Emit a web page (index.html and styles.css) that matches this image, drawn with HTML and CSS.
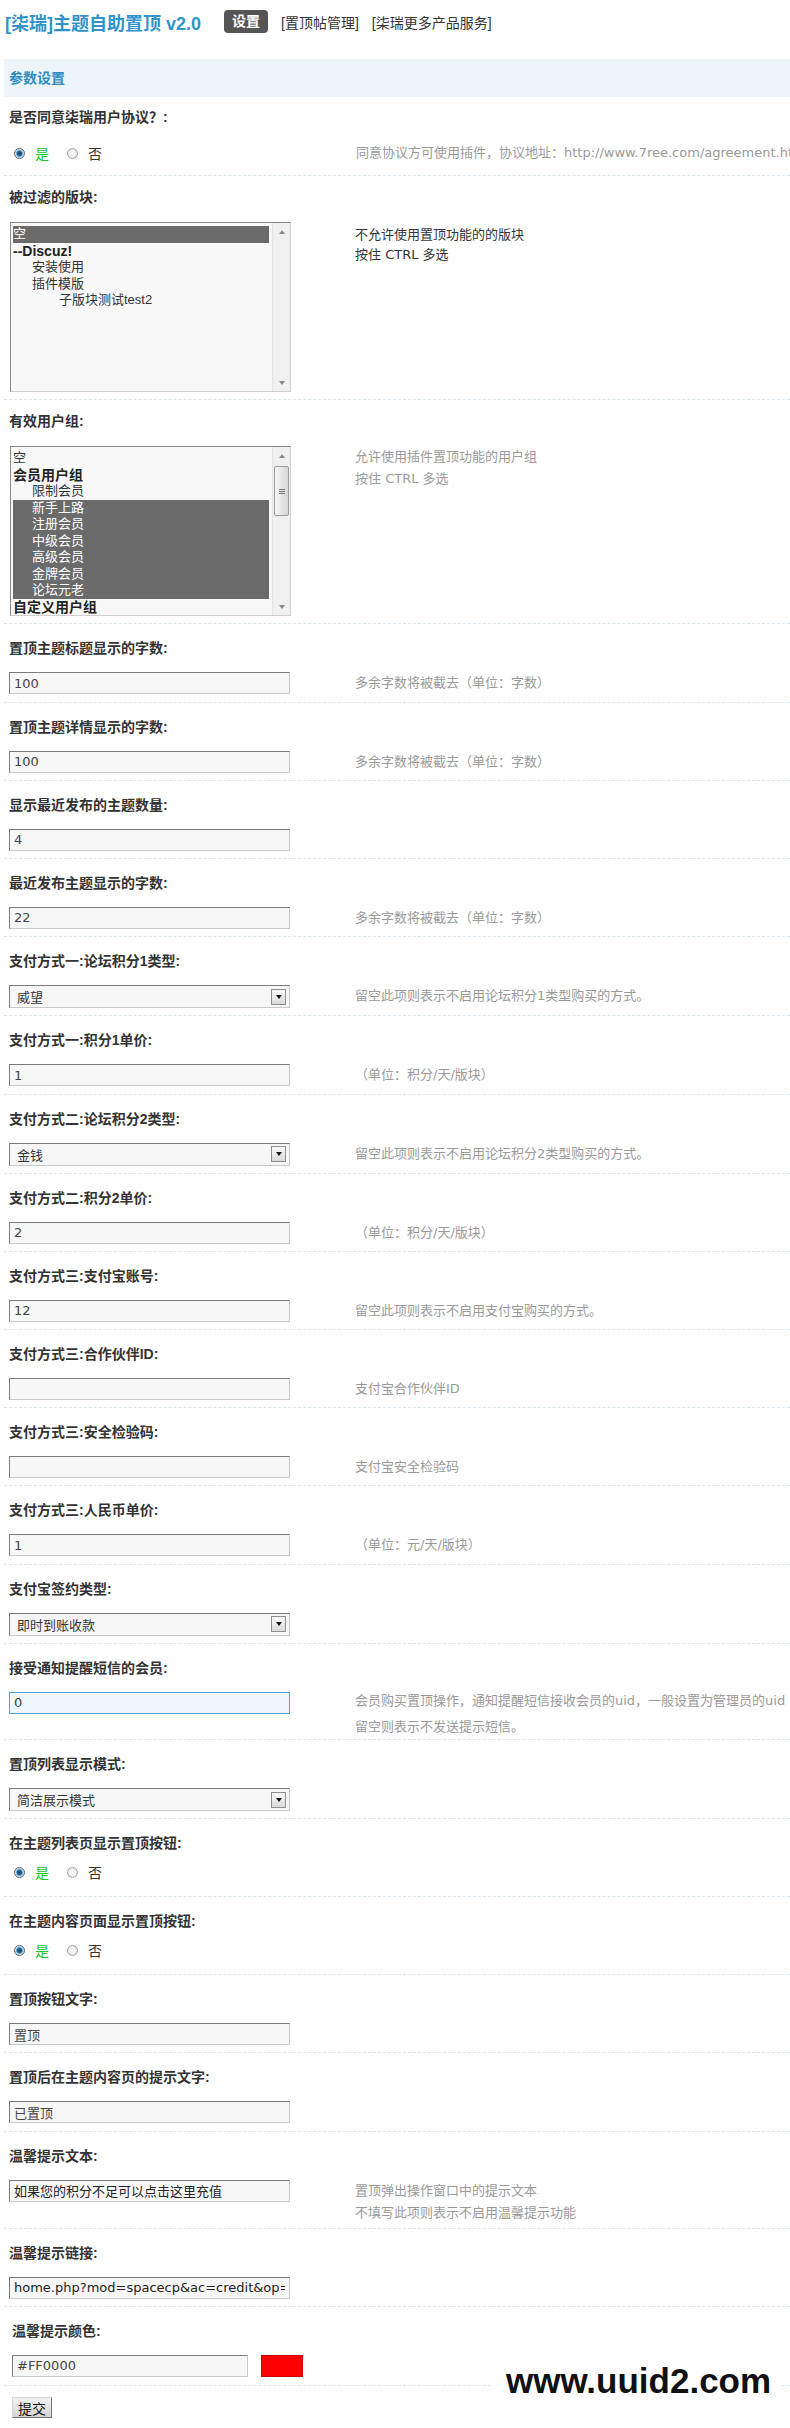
FILE: index.html
```html
<!DOCTYPE html>
<html lang="zh-CN">
<head>
    <meta charset="UTF-8">
    <title>[柒瑞]主题自助置顶 v2.0</title>
    <link rel="stylesheet" href="styles.css">
</head>
<body>
<div class="page">

    <div class="topbar">
        <span class="title">[柒瑞]主题自助置顶 v2.0</span>
        <span class="tab-on">设置</span>
        <span class="tab-link">[置顶帖管理]</span>
        <span class="tab-link">[柒瑞更多产品服务]</span>
    </div>

    <div class="section-title">参数设置</div>

    <div class="rows">

        <div class="row row-first">
            <div class="label">是否同意柒瑞用户协议？:</div>
            <div class="field">
                <div class="radios">
                    <span class="radio radio-on"></span><span class="opt-yes">是</span>
                    <span class="radio"></span><span>否</span>
                </div>
                <div class="tip tip-radio">同意协议方可使用插件，协议地址：http://www.7ree.com/agreement.html</div>
            </div>
        </div>

        <div class="row row-list">
            <div class="label">被过滤的版块:</div>
            <div class="field">
                <div class="listbox">
                    <div class="list-items">
                        <div class="sel">空</div>
                        <div class="group">--Discuz!</div>
                        <div class="item">安装使用</div>
                        <div class="item">插件模版</div>
                        <div class="item-deep">子版块测试test2</div>
                    </div>
                    <div class="scrollbar">
                        <span class="sb-up"></span>
                        <span class="sb-down"></span>
                    </div>
                </div>
                <div class="tip tip-dark">不允许使用置顶功能的的版块<br>按住 CTRL 多选</div>
            </div>
        </div>

        <div class="row row-list">
            <div class="label">有效用户组:</div>
            <div class="field">
                <div class="listbox">
                    <div class="list-items">
                        <div>空</div>
                        <div class="group">会员用户组</div>
                        <div class="item">限制会员</div>
                        <div class="item sel">新手上路</div>
                        <div class="item sel">注册会员</div>
                        <div class="item sel">中级会员</div>
                        <div class="item sel">高级会员</div>
                        <div class="item sel">金牌会员</div>
                        <div class="item sel">论坛元老</div>
                        <div class="group">自定义用户组</div>
                    </div>
                    <div class="scrollbar">
                        <span class="sb-up"></span>
                        <span class="sb-thumb"><span class="grip"></span></span>
                        <span class="sb-down"></span>
                    </div>
                </div>
                <div class="tip">允许使用插件置顶功能的用户组<br>按住 CTRL 多选</div>
            </div>
        </div>

        <div class="row">
            <div class="label">置顶主题标题显示的字数:</div>
            <div class="field">
                <input class="input" type="text" value="100">
                <div class="tip">多余字数将被截去（单位：字数）</div>
            </div>
        </div>

        <div class="row">
            <div class="label">置顶主题详情显示的字数:</div>
            <div class="field">
                <input class="input" type="text" value="100">
                <div class="tip">多余字数将被截去（单位：字数）</div>
            </div>
        </div>

        <div class="row">
            <div class="label">显示最近发布的主题数量:</div>
            <div class="field">
                <input class="input" type="text" value="4">
            </div>
        </div>

        <div class="row">
            <div class="label">最近发布主题显示的字数:</div>
            <div class="field">
                <input class="input" type="text" value="22">
                <div class="tip">多余字数将被截去（单位：字数）</div>
            </div>
        </div>

        <div class="row">
            <div class="label">支付方式一:论坛积分1类型:</div>
            <div class="field">
                <div class="select"><span>威望</span><span class="select-arrow"></span></div>
                <div class="tip">留空此项则表示不启用论坛积分1类型购买的方式。</div>
            </div>
        </div>

        <div class="row">
            <div class="label">支付方式一:积分1单价:</div>
            <div class="field">
                <input class="input" type="text" value="1">
                <div class="tip">（单位：积分/天/版块）</div>
            </div>
        </div>

        <div class="row">
            <div class="label">支付方式二:论坛积分2类型:</div>
            <div class="field">
                <div class="select"><span>金钱</span><span class="select-arrow"></span></div>
                <div class="tip">留空此项则表示不启用论坛积分2类型购买的方式。</div>
            </div>
        </div>

        <div class="row">
            <div class="label">支付方式二:积分2单价:</div>
            <div class="field">
                <input class="input" type="text" value="2">
                <div class="tip">（单位：积分/天/版块）</div>
            </div>
        </div>

        <div class="row">
            <div class="label">支付方式三:支付宝账号:</div>
            <div class="field">
                <input class="input" type="text" value="12">
                <div class="tip">留空此项则表示不启用支付宝购买的方式。</div>
            </div>
        </div>

        <div class="row">
            <div class="label">支付方式三:合作伙伴ID:</div>
            <div class="field">
                <input class="input" type="text" value="">
                <div class="tip">支付宝合作伙伴ID</div>
            </div>
        </div>

        <div class="row">
            <div class="label">支付方式三:安全检验码:</div>
            <div class="field">
                <input class="input" type="text" value="">
                <div class="tip">支付宝安全检验码</div>
            </div>
        </div>

        <div class="row">
            <div class="label">支付方式三:人民币单价:</div>
            <div class="field">
                <input class="input" type="text" value="1">
                <div class="tip">（单位：元/天/版块）</div>
            </div>
        </div>

        <div class="row">
            <div class="label">支付宝签约类型:</div>
            <div class="field">
                <div class="select"><span>即时到账收款</span><span class="select-arrow"></span></div>
            </div>
        </div>

        <div class="row">
            <div class="label">接受通知提醒短信的会员:</div>
            <div class="field">
                <input class="input input-focus" type="text" value="0">
                <div class="tip tip-uid">会员购买置顶操作，通知提醒短信接收会员的uid，一般设置为管理员的uid<br>留空则表示不发送提示短信。</div>
            </div>
        </div>

        <div class="row">
            <div class="label">置顶列表显示模式:</div>
            <div class="field">
                <div class="select"><span>简洁展示模式</span><span class="select-arrow"></span></div>
            </div>
        </div>

        <div class="row row-radio">
            <div class="label">在主题列表页显示置顶按钮:</div>
            <div class="field">
                <div class="radios">
                    <span class="radio radio-on"></span><span class="opt-yes">是</span>
                    <span class="radio"></span><span>否</span>
                </div>
            </div>
        </div>

        <div class="row row-radio">
            <div class="label">在主题内容页面显示置顶按钮:</div>
            <div class="field">
                <div class="radios">
                    <span class="radio radio-on"></span><span class="opt-yes">是</span>
                    <span class="radio"></span><span>否</span>
                </div>
            </div>
        </div>

        <div class="row">
            <div class="label">置顶按钮文字:</div>
            <div class="field">
                <input class="input" type="text" value="置顶">
            </div>
        </div>

        <div class="row">
            <div class="label">置顶后在主题内容页的提示文字:</div>
            <div class="field">
                <input class="input" type="text" value="已置顶">
            </div>
        </div>

        <div class="row">
            <div class="label">温馨提示文本:</div>
            <div class="field">
                <input class="input input-dark" type="text" value="如果您的积分不足可以点击这里充值">
                <div class="tip tip-2">置顶弹出操作窗口中的提示文本<br>不填写此项则表示不启用温馨提示功能</div>
            </div>
        </div>

        <div class="row">
            <div class="label">温馨提示链接:</div>
            <div class="field">
                <input class="input input-dark" type="text" value="home.php?mod=spacecp&amp;ac=credit&amp;op=buy">
            </div>
        </div>

        <div class="row row-color">
            <div class="label">温馨提示颜色:</div>
            <div class="field">
                <input class="input input-short" type="text" value="#FF0000">
                <span class="swatch"></span>
            </div>
        </div>

    </div>

    <div class="submit-row">
        <button class="btn" type="button">提交</button>
    </div>

    <div class="watermark">www.uuid2.com</div>

</div>
</body>
</html>
```

FILE: styles.css
```css
body {
    margin: 0;
    background: #fff;
    font-family: "Liberation Sans", "Noto Sans CJK SC", sans-serif;
    color: #333;
}

.page {
    position: relative;
    width: 790px;
    height: 2428px;
    overflow: hidden;
}

/* header */

.topbar {
    display: flex;
    align-items: center;
    height: 23px;
    padding: 10px 0 0 5px;
    margin-bottom: 26px;
}

.title {
    font-size: 18px;
    font-weight: bold;
    color: #3094cb;
    margin-right: 23px;
}

.tab-on {
    background: #555;
    color: #fff;
    font-size: 14px;
    font-weight: bold;
    line-height: 23px;
    padding: 0 8px;
    border-radius: 4px;
}

.tab-link {
    font-size: 14px;
    color: #333;
    margin-left: 13px;
}

.section-title {
    margin-left: 4px;
    height: 38px;
    line-height: 38px;
    padding-left: 5px;
    background: #edf5fb;
    color: #2d8cc4;
    font-size: 14px;
    font-weight: bold;
}

/* rows */

.rows {
    margin-left: 4px;
}

.row {
    padding: 15px 0 7.2px 5px;
    border-bottom: 1px dashed #dbe7ee;
    white-space: nowrap;
}

.row-first {
    padding-top: 11px;
    padding-bottom: 11px;
}

.row-first .field {
    margin-top: 16px;
}

.row-radio {
    padding-bottom: 13px;
}

.row-radio .field {
    margin-top: 9px;
}

.row-list {
    padding-top: 12px;
}

.row-list .field {
    margin-top: 16px;
}

.row-color {
    padding-left: 8px;
    padding-bottom: 8px;
}

.label {
    font-size: 14px;
    font-weight: bold;
    line-height: 18px;
    color: #333;
}

.field {
    display: flex;
    align-items: flex-start;
    margin-top: 15px;
}

.tip {
    margin-left: 65px;
    font-family: "DejaVu Sans", "Noto Sans CJK SC", sans-serif;
    font-size: 13px;
    line-height: 22px;
    color: #9a9a9a;
}

.row-list .tip {
    margin-left: 64px;
}

.row-list .tip-dark {
    color: #333;
    line-height: 20px;
    margin-top: 3px;
}

.tip-uid {
    line-height: 26px;
    margin-top: -4px;
    margin-bottom: -8px;
}

.tip-2 {
    margin-bottom: -3px;
}

/* inputs */

.input {
    flex-shrink: 0;
    box-sizing: border-box;
    width: 281px;
    height: 22px;
    margin: 0;
    padding: 0 4px;
    border: 1px solid;
    border-color: #7b7b7b #c8c8c8 #c8c8c8 #7b7b7b;
    background: #f7f7f7;
    font: 13px "DejaVu Sans", "Noto Sans CJK SC", sans-serif;
    color: #444;
    outline: none;
}

.input-dark {
    color: #222;
}

.input-focus {
    border-color: #5b9fcb;
    background: #eef8fc;
}

.input-short {
    width: 236px;
}

.swatch {
    width: 42px;
    height: 22px;
    margin-left: 13px;
    box-sizing: border-box;
    background: #f00;
    border: 1px solid #c40000;
}

.select {
    flex-shrink: 0;
    box-sizing: border-box;
    width: 281px;
    height: 23px;
    display: flex;
    align-items: center;
    justify-content: space-between;
    padding: 0 3px 0 7px;
    border: 1px solid;
    border-color: #7b7b7b #c8c8c8 #c8c8c8 #7b7b7b;
    background: #f7f7f7;
    font-size: 13px;
    color: #333;
}

.select-arrow {
    width: 15px;
    height: 16px;
    box-sizing: border-box;
    border: 1px solid #8e8e8e;
    background: linear-gradient(#fafafa, #d9d9d9);
    display: flex;
    align-items: center;
    justify-content: center;
}

.select-arrow::after {
    content: "";
    border-left: 3.5px solid transparent;
    border-right: 3.5px solid transparent;
    border-top: 4px solid #111;
}

/* radios */

.radios {
    display: flex;
    align-items: center;
    height: 22px;
    padding-left: 5px;
    font-size: 14px;
    color: #333;
}

.radio {
    width: 11px;
    height: 11px;
    box-sizing: border-box;
    border-radius: 50%;
    border: 1px solid #a8a8a8;
    background: radial-gradient(circle, #fff 0, #dcdcdc 100%);
    margin-right: 10px;
}

.radio-on {
    border-color: #56697a;
    background: radial-gradient(circle, #123f66 0, #2c6e9e 2.5px, #a8cbe3 3.5px, #eef4f9 5px);
}

.opt-yes {
    color: #22c322;
    margin-right: 18px;
}

.tip-radio {
    margin-left: 254px;
}

/* list boxes */

.listbox {
    flex-shrink: 0;
    margin-left: 1px;
    width: 281px;
    height: 170px;
    box-sizing: border-box;
    border: 1px solid;
    border-color: #8a8a8a #cfcfcf #cfcfcf #8a8a8a;
    background: #f8f8f8;
    display: flex;
    overflow: hidden;
}

.list-items {
    flex: 1;
    padding: 3px 3px 0 2px;
    font-size: 13px;
    line-height: 16.5px;
    color: #333;
    overflow: hidden;
}

.group {
    font-size: 14px;
    font-weight: bold;
    color: #222;
}

.item {
    padding-left: 19px;
}

.item-deep {
    padding-left: 46px;
}

.sel {
    background: #6b6b6b;
    color: #fff;
}

.scrollbar {
    width: 17px;
    flex-shrink: 0;
    display: flex;
    flex-direction: column;
    align-items: center;
    background: #f0f0f0;
    border-left: 1px solid #e4e4e4;
}

.sb-up,
.sb-down {
    width: 17px;
    height: 17px;
    display: flex;
    align-items: center;
    justify-content: center;
}

.sb-down {
    margin-top: auto;
}

.sb-up::after {
    content: "";
    border-left: 3px solid transparent;
    border-right: 3px solid transparent;
    border-bottom: 4px solid #888;
}

.sb-down::after {
    content: "";
    border-left: 3px solid transparent;
    border-right: 3px solid transparent;
    border-top: 4px solid #888;
}

.sb-thumb {
    width: 15px;
    height: 50px;
    margin-top: 2px;
    box-sizing: border-box;
    border: 1px solid #9a9a9a;
    border-radius: 2px;
    background: linear-gradient(to right, #f6f6f6, #d6d6d6);
    display: flex;
    align-items: center;
    justify-content: center;
}

.grip {
    width: 6px;
    height: 5px;
    background: repeating-linear-gradient(#777 0, #777 1px, transparent 1px, transparent 2px);
}

/* bottom */

.submit-row {
    padding: 11px 0 0 12px;
}

.btn {
    width: 40px;
    height: 21px;
    padding: 0;
    font: 14px "Liberation Sans", "Noto Sans CJK SC", sans-serif;
    color: #111;
    border: 1px solid;
    border-color: #d8d8d8 #777 #777 #d8d8d8;
    background: linear-gradient(#f2f2f2, #d6d6d6);
}

.watermark {
    position: absolute;
    left: 491px;
    top: 2342px;
    width: 290px;
    height: 82px;
    box-sizing: border-box;
    padding: 21px 0 0 15px;
    background: #fff;
    font: bold 35px/35px "Liberation Sans", sans-serif;
    color: #111;
}
```
